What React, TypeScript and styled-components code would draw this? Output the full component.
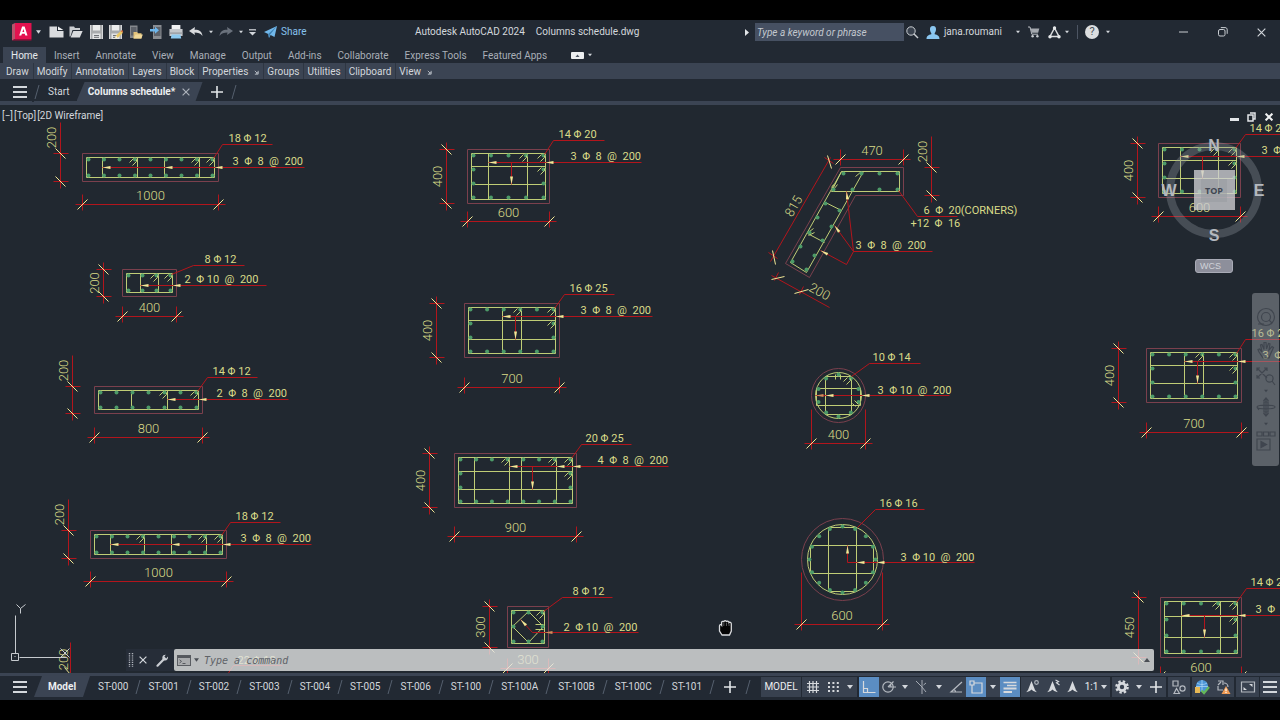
import React from "react";
import styled, { createGlobalStyle } from "styled-components";

const color = {
  frame: "#222933",
  panel: "#3b4453",
  canvas: "#212830",
  text: "#d3d7dc",
  muted: "#a9afb8",
  accent: "#5b8dc2",
  red: "#b3151c",
  outline: "#7b404d",
  yellow: "#d9db88",
  tie: "#c0cd76",
  bar: "#4c9a68",
  arrow: "#f2e795",
};

const GlobalStyle = createGlobalStyle`
  * { box-sizing: border-box; }
  body { margin: 0; background: #000; }
  button, input { font: inherit; color: inherit; }
`;

/* ---------- shell ---------- */

const Page = styled.div`
  display: flex;
  flex-direction: column;
  min-height: 100vh;
  padding: 20px 0;
  background: #000;
  color: ${color.text};
  font: 10px/14px Roboto, "Liberation Sans", sans-serif;
`;

const TitleBar = styled.header`
  display: flex;
  align-items: center;
  height: 24px;
  background: ${color.frame};
`;

const Group = styled.div`
  display: flex;
  align-items: center;
  height: 100%;
`;

const IconButton = styled.button<{ $w: number; $active?: boolean }>`
  display: flex;
  align-items: center;
  justify-content: center;
  flex: none;
  width: ${(p) => p.$w}px;
  height: 20px;
  padding: 0;
  border: 0;
  background: ${(p) => (p.$active ? color.accent : "transparent")};
  color: ${color.text};
`;

const LogoButton = styled(IconButton)`
  margin-left: 9px;
`;

const QuickAccess = styled(Group)`
  margin-left: 4px;
`;

const ShareButton = styled.button`
  display: flex;
  align-items: center;
  gap: 4px;
  padding: 0;
  border: 0;
  background: none;
  color: #86c2ee;
`;

const WindowTitle = styled.h1`
  display: flex;
  flex: 1;
  justify-content: center;
  gap: 11px;
  margin: 0 0 0 6px;
  font-size: 10px;
  font-weight: 400;
  white-space: nowrap;
`;

const SearchInput = styled.input`
  width: 149px;
  height: 18px;
  margin-left: 3px;
  padding: 0 2px;
  border: 0;
  background: #465062;
  font-style: italic;
  &::placeholder { color: #c3c8cf; opacity: 1; }
`;

const AccountButton = styled.button`
  display: flex;
  align-items: center;
  gap: 4px;
  padding: 0 11px 0 4px;
  border: 0;
  background: none;
`;

const Divider = styled.span`
  width: 1px;
  height: 14px;
  margin: 0 4px 0 6px;
  background: #4d5563;
`;

const WindowControls = styled(Group)`
  margin-left: 50px;
`;

/* ---------- ribbon ---------- */

const RibbonTabs = styled.nav`
  display: flex;
  align-items: flex-end;
  height: 19px;
  padding-left: 3px;
  background: ${color.frame};
`;

const RibbonTab = styled.button<{ $active?: boolean }>`
  height: 16px;
  padding: 2px 8px 0;
  border: 0;
  background: ${(p) => (p.$active ? color.panel : "none")};
  color: ${(p) => (p.$active ? "#e6e9ec" : color.muted)};
`;

const RibbonToggleButton = styled.button`
  display: flex;
  align-items: center;
  gap: 4px;
  height: 16px;
  margin-left: 16px;
  padding: 0;
  border: 0;
  background: none;
`;

const PanelBar = styled.div`
  display: flex;
  height: 16px;
  background: ${color.panel};
`;

const PanelButton = styled.button`
  display: flex;
  align-items: center;
  gap: 6px;
  padding: 2px 4px 0 3px;
  border: 0;
  border-right: 1px solid #2e3643;
  background: none;
  &:first-child { padding-left: 6px; }
  &:last-child { border-right: 0; }
`;

/* ---------- tab strips ---------- */

const FileTabs = styled.nav`
  display: flex;
  align-items: center;
  height: 26px;
  padding: 3px 8px 0;
  border-bottom: 4px solid ${color.panel};
  background: ${color.frame};
`;

const StartTab = styled.button`
  padding: 0 7px 0 8px;
  border: 0;
  background: none;
`;

const ActiveTab = styled.div<{ $w: number }>`
  display: flex;
  align-items: center;
  align-self: stretch;
  justify-content: center;
  gap: 5px;
  width: ${(p) => p.$w}px;
  background: ${color.panel};
  clip-path: polygon(8px 0, 100% 0, calc(100% - 7px) 100%, 0 100%);
`;

const TabName = styled.button`
  padding: 0;
  border: 0;
  background: none;
  color: #eceef0;
  font-weight: 700;
  white-space: nowrap;
`;

const StatusBar = styled.footer`
  display: flex;
  align-items: center;
  justify-content: space-between;
  height: 27px;
  border-top: 3px solid ${color.panel};
  background: ${color.frame};
`;

const LayoutTabs = styled.nav`
  display: flex;
  align-items: center;
  gap: 7px;
  height: 100%;
  padding: 0 0 3px 10px;
`;

const ModelTab = styled(ActiveTab)`
  margin: 0 1px 0 -3px;
`;

const LayoutTab = styled.button`
  padding: 0;
  border: 0;
  background: none;
  white-space: nowrap;
`;

const StatusTools = styled.div`
  display: flex;
  align-items: center;
  height: 20px;
  margin-bottom: 3px;
  background: #38414f;
`;

const StatusText = styled.button<{ $w: number }>`
  display: flex;
  align-items: center;
  justify-content: center;
  gap: 3px;
  width: ${(p) => p.$w}px;
  height: 20px;
  padding: 0;
  border: 0;
  background: none;
  color: #eceef0;
`;

const Gap = styled.span<{ $w: number }>`
  width: ${(p) => p.$w}px;
  height: 20px;
  background: ${color.frame};
`;

/* ---------- drawing area ---------- */

const Viewport = styled.main`
  position: relative;
  flex: 1;
  min-height: 568px;
  overflow: hidden;
  background: ${color.canvas};
`;

const Sheet = styled.svg`
  position: absolute;
  inset: 0;
  width: 100%;
  height: 100%;
`;

const ViewportControls = styled.div`
  position: absolute;
  top: 4px;
  left: 2px;
  display: flex;
  gap: 1px;
`;

const ViewportControl = styled.button`
  padding: 0;
  border: 0;
  background: none;
`;

const ViewportWindow = styled.div`
  position: absolute;
  top: 2px;
  right: 3px;
  display: flex;
`;

const ViewCube = styled.div`
  position: absolute;
  top: 32px;
  right: 12px;
  display: flex;
  flex-direction: column;
  align-items: center;
  gap: 16px;
`;

const WcsButton = styled.button`
  width: 38px;
  height: 14px;
  padding: 0 4px;
  border: 1px solid #a9abb6;
  border-radius: 3px;
  background: #8d8f9b;
  color: #d0d2d9;
  font: 9px/12px "Liberation Sans", sans-serif;
  text-align: left;
`;

const NavigationBar = styled.div`
  position: absolute;
  top: 188px;
  right: 1px;
  display: flex;
  flex-direction: column;
  align-items: center;
  width: 27px;
  height: 173px;
  padding-top: 8px;
  border-radius: 3px;
  background: rgba(150, 154, 160, 0.5);
`;

const NavButton = styled.button<{ $h: number }>`
  display: flex;
  align-items: center;
  justify-content: center;
  width: 27px;
  height: ${(p) => p.$h}px;
  padding: 0;
  border: 0;
  background: none;
  color: #3d434c;
`;

const CommandBar = styled.form`
  position: absolute;
  right: 126px;
  bottom: 2px;
  left: 126px;
  display: flex;
  align-items: center;
  height: 22px;
`;

const CommandTools = styled.div`
  display: flex;
  align-items: center;
  width: 48px;
  height: 22px;
  background: #262d38;
`;

const CommandField = styled.div`
  display: flex;
  flex: 1;
  align-items: center;
  height: 22px;
  border-radius: 2px;
  background: rgba(226, 227, 228, 0.8);
`;

const CommandInput = styled.input`
  flex: 1;
  height: 20px;
  padding: 0 5px;
  border: 0;
  outline: 0;
  background: none;
  font: italic 10px/14px "DejaVu Sans Mono", "Liberation Mono", monospace;
  &::placeholder { color: #5f6368; opacity: 1; }
`;

const HandCursor = styled.svg`
  position: absolute;
  top: 514px;
  left: 718px;
`;

/* ---------- small icons ---------- */

const Caret = ({ up = false, fill = "#d3d7dc", w = 6 }: { up?: boolean; fill?: string; w?: number }) => (
  <svg width={w} height="4" viewBox="0 0 6 4">
    <path d={up ? "M0 4L3 0L6 4Z" : "M0 0H6L3 4Z"} fill={fill} />
  </svg>
);

const Slash = ({ w = 6 }: { w?: number }) => (
  <svg width={w} height="14" viewBox="0 0 6 14">
    <path d="M1 14L5 0" stroke="#56606f" />
  </svg>
);

const Menu = () => (
  <svg width="14" height="12" viewBox="0 0 14 12">
    <path d="M0 1H14M0 6H14M0 11H14" stroke="#d3d7dc" strokeWidth="2" />
  </svg>
);

const Plus = () => (
  <svg width="12" height="12" viewBox="0 0 12 12">
    <path d="M6 0V12M0 6H12" stroke="#e2e5e8" strokeWidth="1.6" />
  </svg>
);

const Cross = ({ size = 8, stroke = "#d3d7dc", width = 1.2 }: { size?: number; stroke?: string; width?: number }) => (
  <svg width={size} height={size} viewBox="0 0 8 8">
    <path d="M0.6 0.6L7.4 7.4M7.4 0.6L0.6 7.4" stroke={stroke} strokeWidth={width} />
  </svg>
);

const Launcher = () => (
  <svg width="5" height="5" viewBox="0 0 6 6">
    <path d="M1 1L4 4M5 1V5H1M2.5 5L5 2.5" stroke="#c6cbd2" fill="none" />
  </svg>
);

const Logo = () => (
  <svg width="20" height="18" viewBox="0 0 20 18">
    <path d="M0 1.5L3 0V16L0 17.5Z" fill="#b8536b" />
    <path d="M3 0H19.5V16H3Z" fill="#e3124f" />
    <path d="M0 17.5L3 16H19.5V17.5Z" fill="#9d0f3b" />
    <path d="M7.2 12.5L10.1 3.5H12.6L15.5 12.5H13.3L12.8 10.8H9.9L9.3 12.5ZM10.4 9.1H12.3L11.35 5.9Z" fill="#fff" fillRule="evenodd" />
  </svg>
);

const NewIcon = () => (
  <svg width="15" height="12" viewBox="0 0 15 12">
    <path d="M0.5 0.5H8V5H14.5V11.5H0.5Z" fill="#d9dbde" />
    <path d="M9 0.5L14.3 4H9Z" fill="#f2f3f4" />
  </svg>
);
const OpenIcon = () => (
  <svg width="14" height="12" viewBox="0 0 14 12">
    <path d="M0.5 0.5H5L6 2H11V4H3.5L1.5 10.5H0.5Z" fill="#c9ccd0" />
    <path d="M4.3 5H13.6L10.8 11.5H1.6Z" fill="#d9dbde" />
  </svg>
);
const Disk = () => (
  <>
    <path d="M0 0H13V14H0Z" fill="#a9abad" />
    <path d="M3 0H10V5.5H3Z" fill="#eceded" />
    <path d="M2.5 8.5H10.5V14H2.5Z" fill="#e4e5e6" />
    <path d="M4 10.5H9M4 12.3H9" stroke="#6d7075" />
    <path d="M0.5 0V14M12.5 0V14" stroke="#d6d7d9" />
  </>
);
const SaveIcon = () => (
  <svg width="13" height="14" viewBox="0 0 13 14"><Disk /></svg>
);
const SaveAsIcon = () => (
  <svg width="14" height="14" viewBox="0 0 14 14">
    <Disk />
    <path d="M6 13.5L7 10.5L12 5.8L14 7.8L8.8 12.8Z" fill="#e9c766" />
    <path d="M6 13.5L7 10.5L8.8 12.8Z" fill="#f6f1e0" />
    <path d="M11.5 6.3L13 5L14 6V7.6Z" fill="#c9663d" />
  </svg>
);
const OpenDeviceIcon = () => (
  <svg width="14" height="14" viewBox="0 0 14 14">
    <path d="M1 0.5H8.5V13H1Z" fill="#85888d" />
    <path d="M2 2H7.5V10.5H2Z" fill="#5d6169" />
    <path d="M4.5 7H8L9 8.2H12.5V13.5H4.5Z" fill="#e2c27a" />
    <path d="M6.5 9.5H13.8L12.3 13.5H4.5Z" fill="#f1d999" />
  </svg>
);
const SaveDeviceIcon = () => (
  <svg width="13" height="14" viewBox="0 0 13 14">
    <path d="M3 0H11.5V14H3Z" fill="#8a8d92" />
    <path d="M4 2H10.5V11H4Z" fill="#5d6169" />
    <path d="M0 4H5V1.8L9 5.3L5 8.8V6.5H0Z" fill="#6db6ec" />
  </svg>
);
const PrintIcon = () => (
  <svg width="14" height="14" viewBox="0 0 16 14" preserveAspectRatio="none">
    <path d="M3 0H13V5H3Z" fill="#f1f2f3" />
    <path d="M0.5 4H15.5V11H0.5Z" fill="#c4c7cb" />
    <path d="M0.5 7.5H15.5V8.7H0.5Z" fill="#92969c" />
    <path d="M3 9.5H13L14 13.5H2Z" fill="#8ecbf1" />
  </svg>
);
const UndoIcon = ({ redo = false }: { redo?: boolean }) => (
  <svg width="14" height="10" viewBox="0 0 14 10">
    <g transform={redo ? "translate(14 0) scale(-1 1)" : undefined}>
      <path d="M0 4L6 0L5.5 2.8C10 2.6 13 4.5 13.5 9C11.5 6.4 9 5.6 5.5 5.6L6 8Z" fill={redo ? "#6a717c" : "#d9dbde"} />
    </g>
  </svg>
);
const QuickMenuIcon = () => (
  <svg width="7" height="7" viewBox="0 0 7 7">
    <path d="M0 0.8H7" stroke="#d3d7dc" strokeWidth="1.2" />
    <path d="M0 3H7L3.5 6.6Z" fill="#d3d7dc" />
  </svg>
);
const PlaneIcon = () => (
  <svg width="13" height="12" viewBox="0 0 13 12">
    <path d="M0 6L13 0L10.5 11L6.6 9L5 12L4.2 8Z" fill="#71b7ea" />
    <path d="M4.2 8L13 0L6 8.7L5 12Z" fill="#3c7fb2" />
  </svg>
);
const SearchIcon = () => (
  <svg width="13" height="13" viewBox="0 0 13 13">
    <circle cx="5" cy="5" r="4.2" stroke="#c9cdd2" fill="#3a424e" />
    <path d="M8 8L12 12" stroke="#c9cdd2" strokeWidth="1.4" />
  </svg>
);
const UserIcon = () => (
  <svg width="14" height="13" viewBox="0 0 14 13">
    <path d="M7 0C9.4 0 10.2 1.7 10 3.7C9.8 5.6 9 6.6 8.7 7V8.2C11.5 8.8 13.5 9.7 13.5 13H0.5C0.5 9.7 2.5 8.8 5.3 8.2V7C5 6.6 4.2 5.6 4 3.7C3.8 1.7 4.6 0 7 0Z" fill="#8ac6f0" />
  </svg>
);
const CartIcon = () => (
  <svg width="12" height="12" viewBox="0 0 12 12">
    <path d="M0 1H2L3.8 8.2H10" stroke="#b9bdc3" fill="none" />
    <path d="M2.6 2.5H11.3L10.2 6.8H3.6Z" fill="#a4a8ae" />
    <circle cx="4.6" cy="10.3" r="1.2" fill="#c9cdd2" />
    <circle cx="9.4" cy="10.3" r="1.2" fill="#c9cdd2" />
  </svg>
);
const AppsIcon = () => (
  <svg width="13" height="13" viewBox="0 0 13 13">
    <path d="M6.5 2L2 10.5H11Z" stroke="#d9dbde" fill="none" strokeWidth="1.5" />
    <circle cx="6.5" cy="2" r="1.7" fill="#e6e8ea" />
    <circle cx="2" cy="10.8" r="1.7" fill="#e6e8ea" />
    <circle cx="11" cy="10.8" r="1.7" fill="#e6e8ea" />
  </svg>
);
const HelpBadge = styled.span`
  display: flex;
  align-items: center;
  justify-content: center;
  width: 14px;
  height: 14px;
  border-radius: 50%;
  background: #dcdee0;
  color: #4a4f57;
  font-size: 11px;
  line-height: 14px;
`;
const RestoreIcon = () => (
  <svg width="10" height="10" viewBox="0 0 10 10">
    <rect x="0.5" y="2.5" width="6.5" height="6.5" rx="1.5" stroke="#c9cdd2" fill="none" />
    <path d="M2.8 0.6H7C8.4 0.6 9.2 1.4 9.2 2.8V6.8" stroke="#c9cdd2" fill="none" />
  </svg>
);
const RibbonToggle = () => (
  <svg width="13" height="7" viewBox="0 0 13 7">
    <rect width="13" height="7" rx="1" fill="#eceef0" />
    <path d="M4.5 5L6.5 2.5L8.5 5Z" fill="#4d5563" />
  </svg>
);
const Terminal = () => (
  <svg width="14" height="11" viewBox="0 0 14 11">
    <rect x="0.5" y="0.5" width="13" height="10" stroke="#5a5d62" fill="#a9abad" />
    <path d="M0.5 0.5H13.5V3H0.5Z" fill="#55585d" />
    <path d="M2.5 4.8L4.5 6.4L2.5 8M5.5 8.5H8.5" stroke="#55585d" fill="none" />
  </svg>
);
const Wrench = () => (
  <svg width="13" height="13" viewBox="0 0 13 13">
    <path d="M1.5 11.7L7.6 5.4" stroke="#c9cdd2" strokeWidth="2.2" strokeLinecap="round" />
    <path d="M12 2.6C12.4 4.9 11 6.8 8.8 6.6C6.8 6.4 6 4.6 6.4 3C6.8 1.4 8.2 0.6 9.8 0.8L8.4 2.6L10.2 4.4Z" fill="#c9cdd2" />
  </svg>
);
const Grip = () => (
  <svg width="6" height="14" viewBox="0 0 6 14">
    <path d="M1.5 0V14M4.5 0V14" stroke="#aeb3ba" strokeWidth="1.4" strokeDasharray="1.2 1" />
  </svg>
);

/* status-bar icons share a 16px box */
const Glyph = ({ children, size = 16 }: { children: React.ReactNode; size?: number }) => (
  <svg width={size} height={size} viewBox="0 0 16 16" fill="none" stroke="#d6d9dd" strokeWidth="1.2">
    {children}
  </svg>
);
const GridIcon = () => <Glyph><path d="M4.5 2V14M8 2V14M11.5 2V14M2 4.5H14M2 8H14M2 11.5H14" /></Glyph>;
const SnapIcon = () => (
  <Glyph><path d="M3 4H14M3 8H14M3 12H14" strokeWidth="2" strokeDasharray="2 2.4" /></Glyph>
);
const OrthoIcon = () => <Glyph><path d="M2.5 2V13.5H14.5M2.5 9.5H6.5V13.5" /></Glyph>;
const PolarIcon = () => (
  <Glyph>
    <circle cx="7" cy="8" r="5.2" stroke="#b4b9c0" />
    <path d="M7 8H15M7 8L12.5 2.5M10 8A3 3 0 0 0 9.2 6" stroke="#b4b9c0" />
  </Glyph>
);
const IsoIcon = () => <Glyph><path d="M2 2L8 8M8 1V15M8 8L12 13M9.5 6L12 4" stroke="#a5abb4" strokeWidth="1" /></Glyph>;
const AngleIcon = () => <Glyph><path d="M14 3L3 13H14M5.5 10.5C7 10.8 7.6 12 7.6 13" stroke="#b4b9c0" /></Glyph>;
const OsnapIcon = () => (
  <Glyph><path d="M4 4H14V14H4Z" /><path d="M2 2H6V6H2Z" fill={color.accent} /></Glyph>
);
const WeightIcon = () => <Glyph><path d="M1.5 3.5H14.5M5 6.5H14.5" strokeWidth="1.6" /><path d="M1.5 9.5H14.5M1.5 13H10" strokeWidth="2.2" /></Glyph>;
const Person = ({ kind }: { kind: number }) => (
  <Glyph>
    <path d="M7.5 2L11 11L12.8 13.2L9.2 12L7.5 10.5L5.8 12L2.2 13.2L4 11Z" fill="#d6d9dd" stroke="none" />
    {kind === 1 && <circle cx="12.5" cy="3.5" r="1.8" stroke="#aeb4bc" />}
    {kind === 2 && <path d="M10.5 1L13.5 2.5L11.5 3.8L14.5 6" stroke="#d6d9dd" />}
  </Glyph>
);
const GearIcon = () => (
  <Glyph>
    <circle cx="8" cy="8" r="5.6" strokeWidth="2.4" strokeDasharray="2.4 2" />
    <circle cx="8" cy="8" r="3.6" strokeWidth="2.8" />
  </Glyph>
);
const IsolateIcon = () => (
  <Glyph>
    <path d="M2 2H7V7H2ZM8.5 14.5L5.5 9.5L3 14.5Z" stroke="#b4b9c0" />
    <circle cx="11.5" cy="9.5" r="2.6" stroke="#b4b9c0" />
  </Glyph>
);
const GlobeIcon = () => (
  <Glyph>
    <circle cx="8" cy="7" r="6" fill="#4b94d6" stroke="none" />
    <path d="M3 4C6 6 10 6 13 4M8 1V13M2 7.5H14" stroke="#a9d4f4" strokeWidth="0.8" />
    <path d="M1 8H6V14H1Z" fill="#e7b955" stroke="none" />
    <path d="M7.5 11.5L10 14L15 8" stroke="#64b85a" strokeWidth="2.2" />
  </Glyph>
);
const WarnIcon = () => (
  <Glyph>
    <path d="M3 2H8V6M3 6L6 3M3 7V11H8M9 4A4 4 0 0 1 13 8" stroke="#b4b9c0" />
    <path d="M11 7L15.5 15H6.5Z" fill="#ef9c55" stroke="none" />
    <path d="M11 9.5V12.3M11 13V14" stroke="#fff" />
  </Glyph>
);
const FullIcon = () => (
  <Glyph>
    <path d="M1.5 3H14.5V13H1.5Z" stroke="#b4b9c0" />
    <path d="M9 5H12.5V8ZM3.5 8V11H7Z" fill="#d6d9dd" stroke="none" />
  </Glyph>
);

/* ---------- CAD drawing ---------- */

const CadDim = styled.text`
  fill: ${color.yellow};
  font: 300 13px Roboto, "Liberation Sans", sans-serif;
  text-anchor: middle;
`;

const CadLabel = styled.text`
  fill: ${color.yellow};
  font: 400 11px Roboto, "Liberation Sans", sans-serif;
  white-space: pre;
`;

const Red = ({ d }: { d: string }) => <path d={d} stroke={color.red} fill="none" />;
const Ink = ({ d }: { d: string }) => <path d={d} stroke={color.arrow} fill="none" />;
const Tie = ({ d }: { d: string }) => <path d={d} stroke={color.tie} fill="none" />;
const Rebar = ({ x, y }: { x: number; y: number }) => <circle cx={x} cy={y} r={2} fill={color.bar} />;

const Hook = ({ x, y }: { x: number; y: number }) => (
  <Tie d={`M${x - 4} ${y + 1}L${x - 8} ${y + 5}M${x - 1} ${y + 2}V${y + 4}L${x - 5} ${y + 8}`} />
);

const Arrow = ({ x, y, turn = 0, fill = color.arrow }: { x: number; y: number; turn?: number; fill?: string }) => (
  <path d="M0 0L8 -1.5V1.5Z" fill={fill} transform={`translate(${x} ${y}) rotate(${turn})`} />
);

function HorizontalDim({ x1, x2, y, from = y - 10, value }: { x1: number; x2: number; y: number; from?: number; value: number }) {
  return (
    <g>
      <Red d={`M${x1 - 7} ${y}H${x2 + 7}M${x1} ${from}V${y + 6}M${x2} ${from}V${y + 6}`} />
      <Ink d={`M${x1 - 5} ${y + 5}L${x1 + 5} ${y - 5}M${x2 - 5} ${y + 5}L${x2 + 5} ${y - 5}`} />
      <CadDim x={(x1 + x2) / 2} y={y - 5}>{value}</CadDim>
    </g>
  );
}

function VerticalDim({ y1, y2, x, above, value }: { y1: number; y2: number; x: number; above?: boolean; value: number }) {
  const mid = above ? y1 - 16 : (y1 + y2) / 2;
  return (
    <g>
      <Red d={`M${x} ${above ? y1 - 31 : y1 - 7}V${y2 + 7}M${x - 7} ${y1}H${x + 8}M${x - 7} ${y2}H${x + 8}`} />
      <Ink d={`M${x - 5} ${y1 - 5}L${x + 5} ${y1 + 5}M${x - 5} ${y2 - 5}L${x + 5} ${y2 + 5}`} />
      <CadDim transform={`translate(${x - 5} ${mid}) rotate(-90)`}>{value}</CadDim>
    </g>
  );
}

/* A callout: slanted tail from the bar, then an underlined label. */
function BarNote({ from, knee, end, textX, text }: { from: [number, number]; knee: [number, number]; end: number; textX: number; text: string }) {
  return (
    <g>
      <Red d={`M${from[0]} ${from[1]}L${knee[0]} ${knee[1]}H${end}`} />
      <CadLabel x={textX} y={knee[1] - 3}>{text}</CadLabel>
    </g>
  );
}

type Section = {
  x: number; y: number; x2: number; y2: number;
  size: [number, number];
  across: number;
  sides?: number;
  vt: number[];
  ht?: number[];
  hooks: number[];
  dimX: number;
  dimY: number;
  above?: boolean;
  bars: string;
  barsAt: [number, number];
  knee: [number, number];
  ties: string;
  tiesX: number;
  tiesY: number;
  tiesEnd: number;
  tips: number[];
  down?: number;
};

const sections: Section[] = [
  { x: 82, y: 153, x2: 218, y2: 181, size: [1000, 200], across: 9, vt: [102, 137, 164, 199], hooks: [137, 199, 214], dimX: 60, dimY: 204, above: true, bars: "18 Φ 12", barsAt: [228, 272], knee: [222, 144], ties: "3  Φ  8  @  200", tiesX: 232, tiesY: 167, tiesEnd: 304, tips: [102, 164, 214] },
  { x: 122, y: 269, x2: 176, y2: 296, size: [400, 200], across: 4, vt: [140, 158], hooks: [158, 172], dimX: 103, dimY: 316, bars: "8 Φ 12", barsAt: [204, 244], knee: [193, 265], ties: "2  Φ 10  @  200", tiesX: 184, tiesY: 285, tiesEnd: 266, tips: [140, 172] },
  { x: 94, y: 386, x2: 202, y2: 413, size: [800, 200], across: 7, vt: [131, 167], hooks: [167, 198], dimX: 72, dimY: 437, above: true, bars: "14 Φ 12", barsAt: [212, 257], knee: [207, 377], ties: "2  Φ  8  @  200", tiesX: 216, tiesY: 399, tiesEnd: 288, tips: [167, 198] },
  { x: 90, y: 530, x2: 226, y2: 558, size: [1000, 200], across: 9, vt: [110, 144, 171, 206], hooks: [144, 206, 222], dimX: 68, dimY: 581, above: true, bars: "18 Φ 12", barsAt: [235, 280], knee: [230, 522], ties: "3  Φ  8  @  200", tiesX: 240, tiesY: 544, tiesEnd: 311, tips: [110, 171, 222] },
  { x: 467, y: 149, x2: 549, y2: 203, size: [600, 400], across: 5, sides: 2, vt: [488, 527], ht: [166, 184], hooks: [527, 545], dimX: 446, dimY: 221, bars: "14 Φ 20", barsAt: [558, 604], knee: [553, 140], ties: "3  Φ  8  @  200", tiesX: 570, tiesY: 162, tiesEnd: 641, tips: [488, 545], down: 511 },
  { x: 464, y: 303, x2: 559, y2: 357, size: [700, 400], across: 6, sides: 2, vt: [502, 521], ht: [320, 339], hooks: [521, 555], dimX: 436, dimY: 387, bars: "16 Φ 25", barsAt: [569, 614], knee: [564, 294], ties: "3  Φ  8  @  200", tiesX: 580, tiesY: 316, tiesEnd: 652, tips: [502, 555], down: 515 },
  { x: 454, y: 453, x2: 576, y2: 507, size: [900, 400], across: 8, sides: 2, vt: [474, 509, 521, 556], ht: [471, 489], hooks: [509, 556, 572], dimX: 429, dimY: 536, bars: "20 Φ 25", barsAt: [585, 631], knee: [581, 444], ties: "4  Φ  8  @  200", tiesX: 597, tiesY: 466, tiesEnd: 668, tips: [509, 556, 572], down: 532 },
  { x: 1158, y: 143, x2: 1240, y2: 197, size: [600, 400], across: 5, sides: 2, vt: [1180, 1218], ht: [160, 178], hooks: [1218, 1236], dimX: 1137, dimY: 216, bars: "14 Φ 20", barsAt: [1249, 1295], knee: [1245, 134], ties: "3  Φ  8  @  200", tiesX: 1261, tiesY: 156, tiesEnd: 1332, tips: [1180, 1236], down: 1202 },
  { x: 1146, y: 348, x2: 1241, y2: 402, size: [700, 400], across: 6, sides: 2, vt: [1184, 1203], ht: [365, 383], hooks: [1203, 1237], dimX: 1118, dimY: 432, bars: "16 Φ 25", barsAt: [1251, 1296], knee: [1245, 339], ties: "3  Φ  8  @  200", tiesX: 1262, tiesY: 361, tiesEnd: 1334, tips: [1184, 1237], down: 1197 },
  { x: 1160, y: 597, x2: 1241, y2: 657, size: [600, 450], across: 5, sides: 2, vt: [1181, 1220], ht: [616, 637], hooks: [1220, 1237], dimX: 1138, dimY: 676, bars: "14 Φ 20", barsAt: [1250, 1296], knee: [1246, 588], ties: "3  Φ  8  @  200", tiesX: 1255, tiesY: 615, tiesEnd: 1326, tips: [1181, 1237], down: 1204 },
];

function RectSection({ s }: { s: Section }) {
  const ix = s.x + 4, iy = s.y + 4, ix2 = s.x2 - 4, iy2 = s.y2 - 4;
  const bars: [number, number][] = [];
  for (let i = 0; i < s.across; i++) {
    const bx = ix + 2 + (i * (ix2 - ix - 4)) / (s.across - 1);
    bars.push([bx, iy + 2], [bx, iy2 - 2]);
  }
  const sides = s.sides ?? 0;
  for (let i = 1; i <= sides; i++) {
    const by = iy + 2 + (i * (iy2 - iy - 4)) / (sides + 1);
    bars.push([ix + 2, by], [ix2 - 2, by]);
  }
  return (
    <g>
      <path d={`M${s.x} ${s.y}H${s.x2}V${s.y2}H${s.x}Z`} stroke={color.outline} fill="none" />
      <HorizontalDim x1={s.x} x2={s.x2} y={s.dimY} value={s.size[0]} />
      <VerticalDim y1={s.y} y2={s.y2} x={s.dimX} above={s.above} value={s.size[1]} />
      <Tie d={`M${ix} ${iy}H${ix2}V${iy2}H${ix}Z`} />
      {s.vt.map((x) => <Tie key={x} d={`M${x} ${iy}V${iy2}`} />)}
      {s.ht?.map((y) => <Tie key={y} d={`M${ix} ${y}H${ix2}`} />)}
      {bars.map(([x, y], i) => <Rebar key={i} x={x} y={y} />)}
      {s.hooks.map((x) => <Hook key={x} x={x} y={iy} />)}
      {s.ht && <Hook x={ix2} y={s.ht[0]} />}
      <BarNote from={[ix2 - 1, iy + 1]} knee={s.knee} end={s.barsAt[1]} textX={s.barsAt[0]} text={s.bars} />
      <Red d={`M${s.tips[0]} ${s.tiesY}H${s.tiesEnd}`} />
      {s.tips.map((x) => <Arrow key={x} x={x} y={s.tiesY} />)}
      {s.down && s.ht && (
        <>
          <Red d={`M${s.down} ${s.tiesY}V${s.ht[1]}`} />
          <Arrow x={s.down} y={s.ht[1]} turn={-90} />
        </>
      )}
      <CadLabel x={s.tiesX} y={s.tiesY - 3}>{s.ties}</CadLabel>
    </g>
  );
}

function ringBars(cx: number, cy: number, r: number, count: number) {
  return Array.from({ length: count }, (_, i) => {
    const a = (i * 2 * Math.PI) / count - Math.PI / 2;
    return <Rebar key={i} x={cx + r * Math.cos(a)} y={cy + r * Math.sin(a)} />;
  });
}

const RoundSmall = () => (
  <g>
    <HorizontalDim x1={811} x2={865} y={443} from={409} value={400} />
    <circle cx="838" cy="395" r="27" stroke={color.outline} fill="none" />
    <circle cx="838" cy="395" r="23" stroke={color.tie} fill="none" />
    <Tie d="M825 376H851V414H825ZM816 388H860V405H816ZM835 374V379M840 374V379" />
    {ringBars(838, 395, 21, 10)}
    <Hook x={851} y={376} />
    <Tie d="M854 400L858 404M852 403L855 406" />
    <BarNote from={[851, 376]} knee={[869, 363]} end={920} textX={872} text="10 Φ 14" />
    <Red d="M815 395H949" />
    <Arrow x={815} y={395} fill="#d08a58" />
    <Arrow x={825} y={395} />
    <Arrow x={861} y={395} />
    <CadLabel x={877} y={393}>{"3  Φ 10  @  200"}</CadLabel>
  </g>
);

const RoundLarge = () => (
  <g>
    <HorizontalDim x1={801} x2={882} y={624} from={572} value={600} />
    <circle cx="842" cy="559" r="41" stroke={color.outline} fill="none" />
    <circle cx="842" cy="559" r="35" stroke={color.tie} fill="none" />
    <Tie d="M828 527H856V591H828ZM810 545H873V573H810Z" />
    {ringBars(842, 559, 33, 16)}
    <BarNote from={[857, 527]} knee={[875, 509]} end={924} textX={879} text="16 Φ 16" />
    <Red d="M847 545V562H974" />
    <Arrow x={847} y={545} turn={90} />
    <Arrow x={856} y={562} />
    <Arrow x={876} y={562} />
    <CadLabel x={900} y={560}>{"3  Φ 10  @  200"}</CadLabel>
  </g>
);

const SquareSection = () => (
  <g>
    <path d="M507 606H548V647H507Z" stroke={color.outline} fill="none" />
    <HorizontalDim x1={507} x2={548} y={668} value={300} />
    <VerticalDim y1={606} y2={647} x={489} value={300} />
    <Tie d="M511 610H544V643H511ZM528 611L543 626L528 642L512 626ZM535 624H543M535 629H543" />
    {[513, 528, 542].map((x) => [612, 626, 641].map((y) => (x === 528 && y === 626 ? null : <Rebar key={`${x}-${y}`} x={x} y={y} />)))}
    <Hook x={544} y={610} />
    <BarNote from={[543, 611]} knee={[562, 597]} end={612} textX={572} text="8 Φ 12" />
    <Red d="M520 619L532 632H638" />
    <Arrow x={520} y={619} turn={47} />
    <Arrow x={544} y={632} fill="#d08a58" />
    <CadLabel x={563} y={630}>{"2  Φ 10  @  200"}</CadLabel>
  </g>
);

const cornerBars: [number, number][] = [
  [843, 173], [861, 173], [879, 173], [897, 173], [833, 189], [852, 189], [879, 189], [897, 189],
  [825, 203], [839, 210], [817, 217], [831, 226], [809, 232], [822, 240], [800, 246], [814, 255], [792, 261], [806, 269],
];

const CornerSection = () => (
  <g>
    <path d="M840 167H903V195H855L809 277L785 263Z" stroke={color.outline} fill="none" />
    <Tie d="M841 171H899V191H831ZM863 171L806 272L790 262L841 171M825 202L841 210M807 233L824 242M861 171L855 176M837 184L833 189M833 184L831 187M813 228L809 231M814 232L808 235" />
    {cornerBars.map(([x, y]) => <Rebar key={`${x}-${y}`} x={x} y={y} />)}
    <HorizontalDim x1={840} x2={903} y={159} value={470} />
    <Red d="M830 157L770 261M824 157L833 163M768 252L777 258M771 275L829 307M778 272L774 280M803 286L799 294" />
    <Ink d="M827 155L831 168M772 250L775 264M771 279L784 276M794 293L808 289" />
    <CadDim transform="translate(797 208) rotate(-60)">815</CadDim>
    <CadDim transform="translate(817 295) rotate(29)">200</CadDim>
    <VerticalDim y1={167} y2={195} x={931} above value={200} />
    <Red d="M898 190L917 216H957" />
    <CadLabel x={923} y={213}>{"6  Φ  20(CORNERS)"}</CadLabel>
    <CadLabel x={910} y={226}>{"+12  Φ  16"}</CadLabel>
    <Red d="M846 191L853 251M834 225L853 251M820 250L846 264L853 251H932" />
    <Arrow x={846} y={191} turn={83} />
    <Arrow x={834} y={225} turn={54} />
    <Arrow x={820} y={250} turn={28} />
    <CadLabel x={855} y={248}>{"3  Φ  8  @  200"}</CadLabel>
  </g>
);

const PartialSection = () => (
  <g>
    <Red d="M70 642V674M227 674L233 665H282" />
    <Ink d="M64 667L70 674" />
    <CadDim transform="translate(67 659) rotate(-90)">200</CadDim>
    <CadLabel x={237} y={663}>22 Φ 12</CadLabel>
  </g>
);

const UcsIcon = () => (
  <g stroke="#c6cace" fill="none">
    <path d="M15 615V653M19 657H66M11 653H18V660H11ZM14 656H15" />
    <path d="M16 604L20 608L25 604M20 608V613M60 648L69 657M69 648L60 657" />
  </g>
);

/* ---------- view cube ---------- */

const CompassLetter = styled.text`
  fill: #b4b8be;
  font: 700 16px "Liberation Sans", sans-serif;
  text-anchor: middle;
`;

const CubeLabel = styled.text`
  fill: #3f4652;
  font: 700 9px "Open Sans", "Liberation Sans", sans-serif;
  text-anchor: middle;
`;

const Compass = () => (
  <svg width="108" height="106" viewBox="0 0 108 106">
    <circle cx="54" cy="53" r="44" stroke="rgba(150,156,166,0.32)" strokeWidth="8" fill="none" />
    <path d="M34 33H75V73H34Z" fill="rgba(206,208,212,0.78)" />
    <path d="M41 42H67V65H41Z" fill="rgba(150,153,160,0.5)" />
    <CompassLetter x="54" y="14">N</CompassLetter>
    <CompassLetter x="54" y="104">S</CompassLetter>
    <CompassLetter x="9" y="59">W</CompassLetter>
    <CompassLetter x="99" y="59">E</CompassLetter>
    <CubeLabel x="54" y="57">TOP</CubeLabel>
  </svg>
);

const NavGlyph = ({ children }: { children: React.ReactNode }) => (
  <svg width="20" height="20" viewBox="0 0 20 20" fill="none" stroke="#40464f" strokeWidth="1.2">
    {children}
  </svg>
);

/* ---------- content ---------- */

const ribbonTabs = ["Home", "Insert", "Annotate", "View", "Manage", "Output", "Add-ins", "Collaborate", "Express Tools", "Featured Apps"];
const panels = ["Draw", "Modify", "Annotation", "Layers", "Block", "Properties", "Groups", "Utilities", "Clipboard", "View"];
const layouts = ["ST-000", "ST-001", "ST-002", "ST-003", "ST-004", "ST-005", "ST-006", "ST-100", "ST-100A", "ST-100B", "ST-100C", "ST-101"];

const quickTools: [string, number, React.ReactNode][] = [
  ["New", 20, <NewIcon />],
  ["Open", 20, <OpenIcon />],
  ["Save", 20, <SaveIcon />],
  ["Save As", 20, <SaveAsIcon />],
  ["Open from Web & Mobile", 20, <OpenDeviceIcon />],
  ["Save to Web & Mobile", 20, <SaveDeviceIcon />],
  ["Plot", 20, <PrintIcon />],
  ["Undo", 20, <UndoIcon />],
  ["Undo history", 10, <Caret w={4} />],
  ["Redo", 20, <UndoIcon redo />],
  ["Redo history", 10, <Caret w={4} />],
  ["Customize toolbar", 13, <QuickMenuIcon />],
];

const statusTools: [string, number, React.ReactNode, boolean?][] = [
  ["Grid", 21, <GridIcon />],
  ["Snap", 20, <SnapIcon />],
  ["Snap settings", 14, <Caret />],
  ["", 2, null],
  ["Ortho", 20, <OrthoIcon />, true],
  ["Polar tracking", 19, <PolarIcon />],
  ["Polar settings", 14, <Caret />],
  ["Isometric drafting", 20, <IsoIcon />],
  ["Isoplane", 14, <Caret />],
  ["Object snap tracking", 20, <AngleIcon />],
  ["Object snap", 20, <OsnapIcon />, true],
  ["Object snap settings", 14, <Caret />],
  ["Lineweight", 20, <WeightIcon />, true],
  ["", 1, null],
  ["Annotation visibility", 22, <Person kind={1} />],
  ["Auto scale", 20, <Person kind={2} />],
  ["Annotation scale", 19, <Person kind={3} />],
];

const endTools: [string, number, React.ReactNode][] = [
  ["", 2, null],
  ["Workspace", 20, <GearIcon />],
  ["Workspace list", 14, <Caret />],
  ["Annotation monitor", 20, <Plus />],
  ["", 2, null],
  ["Isolate objects", 22, <IsolateIcon />],
  ["", 2, null],
  ["Graphics performance", 20, <GlobeIcon />],
  ["Trusted file", 22, <WarnIcon />],
  ["", 2, null],
  ["Clean screen", 23, <FullIcon />],
  ["", 1, null],
  ["Customization", 20, <Menu />],
];

const renderTool = ([label, w, icon, active]: [string, number, React.ReactNode, boolean?], i: number) =>
  label ? <IconButton key={i} aria-label={label} $w={w} $active={active}>{icon}</IconButton> : <Gap key={i} $w={w} />;

export default function App() {
  return (
    <Page>
      <GlobalStyle />
      <TitleBar>
        <Group>
          <LogoButton $w={26} aria-label="Application menu"><Logo /></LogoButton>
          <IconButton $w={7} aria-label="Open application menu"><Caret w={5} /></IconButton>
          <QuickAccess>{quickTools.map(renderTool)}</QuickAccess>
          <Gap $w={5} />
          <ShareButton><PlaneIcon />Share</ShareButton>
        </Group>
        <WindowTitle><span>Autodesk AutoCAD 2024</span><span>Columns schedule.dwg</span></WindowTitle>
        <Group>
          <IconButton $w={10} aria-label="Collapse search">
            <svg width="4" height="7" viewBox="0 0 4 7"><path d="M0 0L4 3.5L0 7Z" fill="#e2e5e8" /></svg>
          </IconButton>
          <SearchInput aria-label="Search" placeholder="Type a keyword or phrase" />
          <IconButton $w={18} aria-label="Run search"><SearchIcon /></IconButton>
          <AccountButton><UserIcon />jana.roumani</AccountButton>
          <IconButton $w={10} aria-label="Account menu"><Caret w={4} /></IconButton>
          <IconButton $w={22} aria-label="App store"><CartIcon /></IconButton>
          <IconButton $w={18} aria-label="Autodesk apps"><AppsIcon /></IconButton>
          <IconButton $w={8} aria-label="Apps menu"><Caret w={4} /></IconButton>
          <Divider />
          <IconButton $w={20} aria-label="Help"><HelpBadge>?</HelpBadge></IconButton>
          <IconButton $w={12} aria-label="Help menu"><Caret w={4} /></IconButton>
          <WindowControls>
            <IconButton $w={39} aria-label="Minimize">
              <svg width="9" height="2" viewBox="0 0 9 2"><path d="M0 1H9" stroke="#c9cdd2" /></svg>
            </IconButton>
            <IconButton $w={39} aria-label="Restore"><RestoreIcon /></IconButton>
            <IconButton $w={38} aria-label="Close"><Cross size={9} width={1} /></IconButton>
          </WindowControls>
        </Group>
      </TitleBar>

      <RibbonTabs>
        {ribbonTabs.map((name, i) => <RibbonTab key={name} $active={i === 0}>{name}</RibbonTab>)}
        <RibbonToggleButton aria-label="Minimize ribbon"><RibbonToggle /><Caret w={4} /></RibbonToggleButton>
      </RibbonTabs>
      <PanelBar>
        {panels.map((name) => (
          <PanelButton key={name}>
            {name}
            {(name === "Properties" || name === "View") && <Launcher />}
          </PanelButton>
        ))}
      </PanelBar>

      <FileTabs>
        <IconButton $w={24} aria-label="File tab menu"><Menu /></IconButton>
        <Gap $w={2} />
        <Slash />
        <StartTab>Start</StartTab>
        <ActiveTab $w={126}>
          <TabName>Columns schedule*</TabName>
          <IconButton $w={11} aria-label="Close drawing"><Cross stroke="#a9afb8" /></IconButton>
        </ActiveTab>
        <IconButton $w={28} aria-label="New drawing"><Plus /></IconButton>
        <Slash />
      </FileTabs>

      <Viewport>
        <Sheet role="img" aria-label="Column schedule drawing">
          <g transform="translate(0.5 -104.5)">
            {sections.map((s, i) => <RectSection key={i} s={s} />)}
            <SquareSection />
            <CornerSection />
            <RoundSmall />
            <RoundLarge />
            <PartialSection />
            <UcsIcon />
          </g>
        </Sheet>

        <ViewportControls>
          <ViewportControl>[−]</ViewportControl>
          <ViewportControl>[Top]</ViewportControl>
          <ViewportControl>[2D Wireframe]</ViewportControl>
        </ViewportControls>

        <ViewportWindow>
          <IconButton $w={17} aria-label="Minimize drawing">
            <svg width="9" height="10" viewBox="0 0 9 10"><path d="M0 7.5H9" stroke="#e2e5e8" strokeWidth="3" /></svg>
          </IconButton>
          <IconButton $w={17} aria-label="Restore drawing">
            <svg width="9" height="10" viewBox="0 0 9 10" fill="none" stroke="#e2e5e8" strokeWidth="1.5"><path d="M1 3H6V9H1ZM3 1H8V7H6" /></svg>
          </IconButton>
          <IconButton $w={17} aria-label="Close drawing window"><Cross stroke="#f0f1f2" width={2} /></IconButton>
        </ViewportWindow>

        <ViewCube>
          <Compass />
          <WcsButton>WCS</WcsButton>
        </ViewCube>

        <NavigationBar>
          <NavButton $h={32} aria-label="Steering wheel">
            <NavGlyph><circle cx="10" cy="10" r="8.5" /><circle cx="10" cy="10" r="4.5" /><path d="M2 17H8M13 13L16 16" /></NavGlyph>
          </NavButton>
          <NavButton $h={33} aria-label="Pan">
            <NavGlyph><path d="M7 18L3 12L2 9.5L3.5 9L6 12L4.5 5L6 4.5L8 9.5L8 2.5H10L10.5 9L12.5 3.5L14 4L13 10L16 6.5L17.5 7.5L14.5 14L13 18Z" /></NavGlyph>
          </NavButton>
          <NavButton $h={20} aria-label="Zoom extents">
            <NavGlyph><path d="M1 2L11 12M11 2L1 12M1 5V2H4M8 2H11V5M1 9V12H4M16 15L19 19" /><circle cx="13.5" cy="12.5" r="3.6" /></NavGlyph>
          </NavButton>
          <NavButton $h={9} aria-label="Zoom menu"><Caret w={4} fill="#3d434c" /></NavButton>
          <NavButton $h={24} aria-label="Orbit">
            <NavGlyph><path d="M10 1V19M7.5 4L10 1L12.5 4M7.5 16L10 19L12.5 16M1 10C1 7.5 19 7.5 19 10C19 12.5 1 12.5 1 10M3 13L1 10.5M8 5V15H12V5Z" /></NavGlyph>
          </NavButton>
          <NavButton $h={9} aria-label="Orbit menu"><Caret w={4} fill="#3d434c" /></NavButton>
          <NavButton $h={26} aria-label="Show motion">
            <NavGlyph><path d="M1 1H6V5H1ZM7.5 1H12.5V5H7.5ZM14 1H19V5H14ZM1 8H14V19H1Z" /><path d="M5 10.5L10.5 13.5L5 16.5Z" fill="#40464f" /></NavGlyph>
          </NavButton>
        </NavigationBar>

        <HandCursor width="15" height="18" viewBox="0 0 15 18">
          <path
            d="M4 16L1.5 12V7C1.5 5.5 3 5.3 3.6 6.2V3.5C3.6 2 5.6 2 5.8 3.2C6 1.2 8.2 1.2 8.5 3C8.8 1.6 10.8 1.8 11 3.6C11.6 3 13.2 3.2 13.3 4.8V12L11.5 16Z"
            fill="#050505"
            stroke="#d9dbde"
            strokeWidth="1.3"
          />
          <path d="M5.8 4V7M8.5 4V7M11 4.5V7" stroke="#8a8d92" strokeWidth="0.6" />
        </HandCursor>

        <CommandBar onSubmit={(e) => e.preventDefault()}>
          <CommandTools>
            <IconButton type="button" $w={10} aria-label="Move command line"><Grip /></IconButton>
            <IconButton type="button" $w={14} aria-label="Close command line"><Cross /></IconButton>
            <IconButton type="button" $w={24} aria-label="Customize command line"><Wrench /></IconButton>
          </CommandTools>
          <CommandField>
            <IconButton type="button" $w={20} aria-label="Recent commands"><Terminal /></IconButton>
            <Caret fill="#4a4e54" w={5} />
            <CommandInput aria-label="Command" placeholder="Type a command" />
            <IconButton type="button" $w={14} aria-label="Command history"><Caret up fill="#4a4e54" /></IconButton>
          </CommandField>
        </CommandBar>
      </Viewport>

      <StatusBar>
        <LayoutTabs>
          <IconButton $w={20} aria-label="Layout menu"><Menu /></IconButton>
          <ModelTab $w={56}><TabName>Model</TabName></ModelTab>
          {layouts.map((name) => (
            <React.Fragment key={name}>
              <LayoutTab>{name}</LayoutTab>
              <Slash />
            </React.Fragment>
          ))}
          <IconButton $w={16} aria-label="New layout"><Plus /></IconButton>
          <Slash />
        </LayoutTabs>
        <StatusTools>
          <StatusText $w={40}>MODEL</StatusText>
          <Gap $w={1} />
          {statusTools.map(renderTool)}
          <StatusText $w={28}>1:1<Caret /></StatusText>
          {endTools.map(renderTool)}
        </StatusTools>
      </StatusBar>
    </Page>
  );
}
